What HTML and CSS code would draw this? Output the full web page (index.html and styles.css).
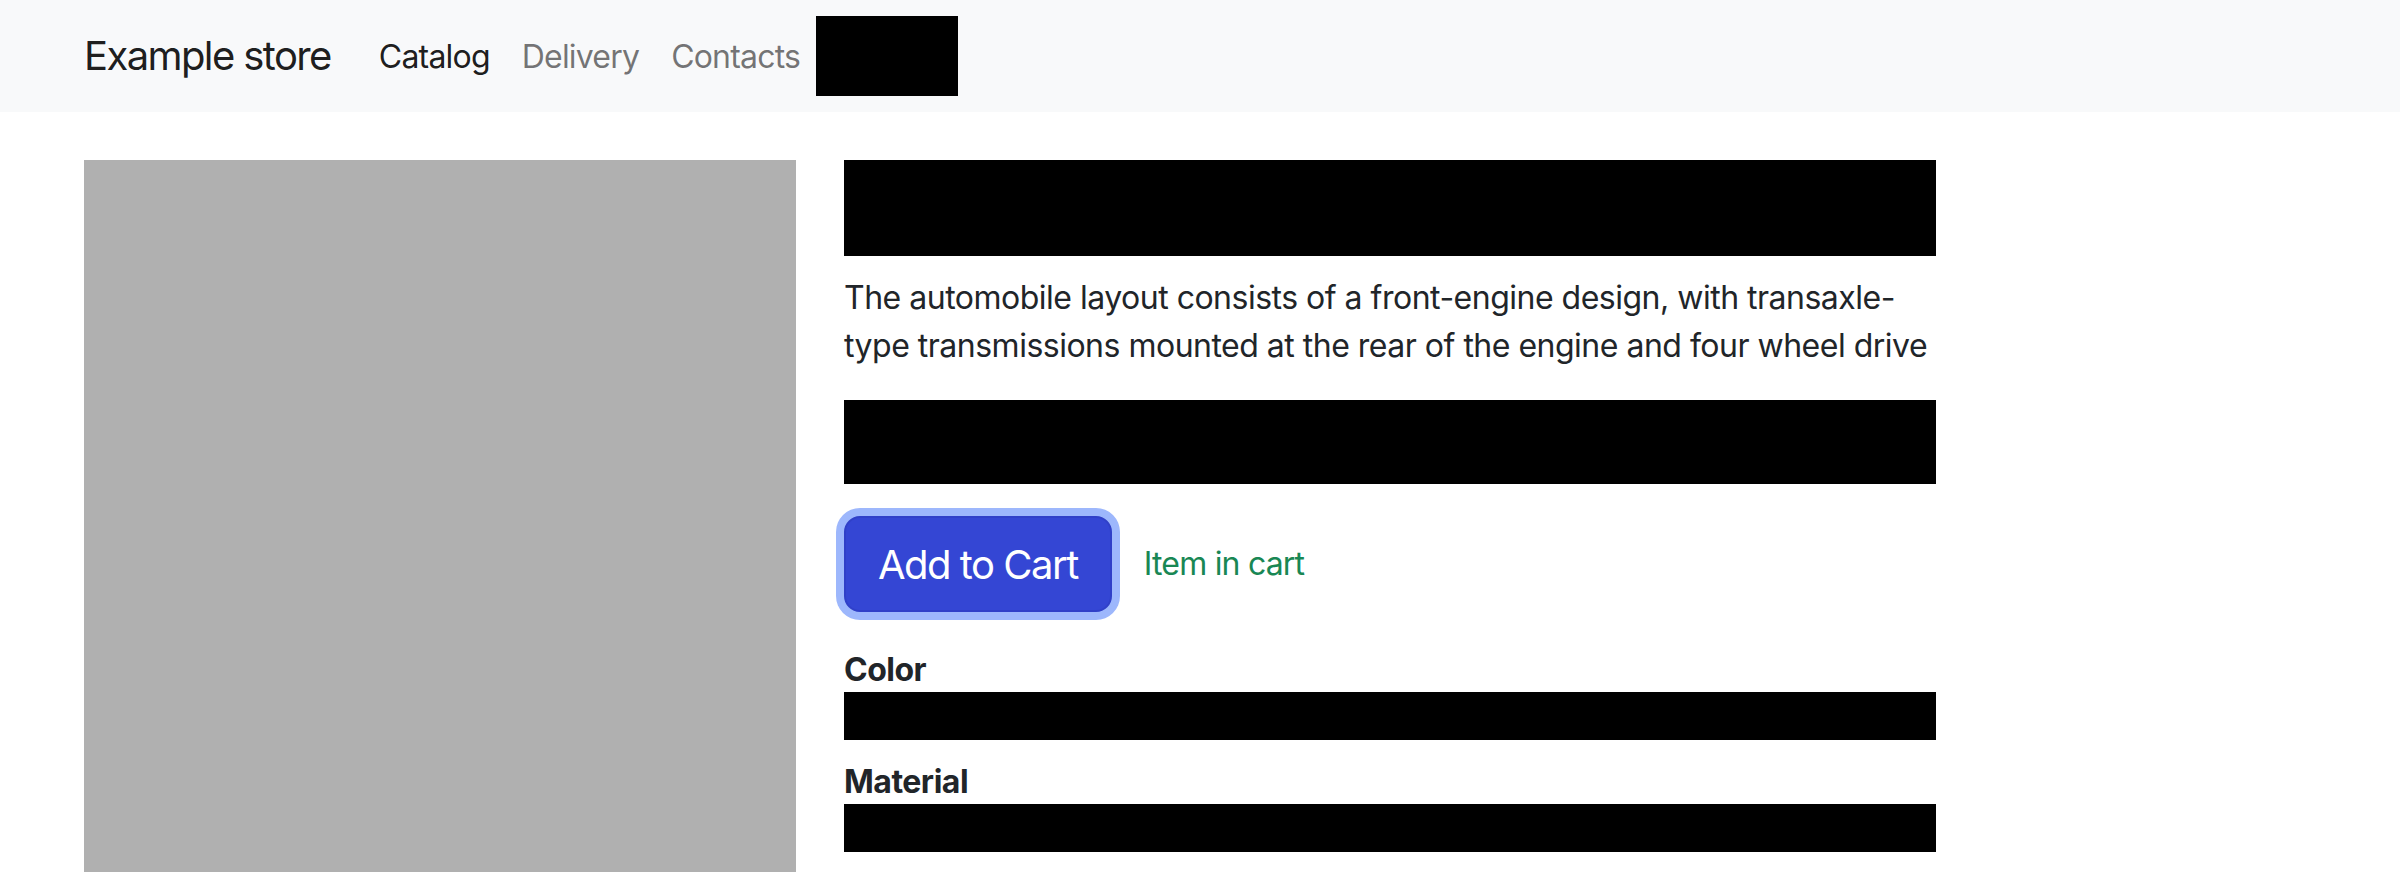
FILE: index.html
```html
<!DOCTYPE html>
<html lang="en">
<head>
<meta charset="utf-8">
<title>Example store</title>
<link rel="stylesheet" href="styles.css">
</head>
<body>
<nav class="navbar">
  <div class="container nav-inner">
    <a class="brand" href="#">Example store</a>
    <ul class="nav">
      <li><a class="nav-link active" href="#">Catalog</a></li>
      <li><a class="nav-link" href="#">Delivery</a></li>
      <li><a class="nav-link" href="#">Contacts</a></li>
      <li><span class="nav-link redacted-link"></span></li>
    </ul>
  </div>
</nav>
<main class="container main">
  <div class="row">
    <div class="col-4">
      <div class="image"></div>
    </div>
    <div class="col-6">
      <div class="redact title"></div>
      <p class="desc">The automobile layout consists of a front-engine design, with transaxle-type transmissions mounted at the rear of the engine and four wheel drive</p>
      <div class="redact price"></div>
      <div class="cart-row">
        <button class="btn" type="button">Add to Cart</button>
        <span class="in-cart">Item in cart</span>
      </div>
      <div class="option">
        <div class="label">Color</div>
        <div class="redact opt"></div>
      </div>
      <div class="option">
        <div class="label">Material</div>
        <div class="redact opt"></div>
      </div>
    </div>
  </div>
</main>
</body>
</html>
```
FILE: styles.css
```css
* { box-sizing: border-box; }
html, body { margin: 0; padding: 0; }
body {
  font-family: Inter, "Noto Sans", "Liberation Sans", sans-serif;
  font-size: 32px;
  line-height: 1.5;
  color: #212529;
  background: #fff;
}
.container {
  width: 2280px;
  margin: 0 auto;
  padding: 0 24px;
}
.navbar {
  background: #f8f9fa;
  padding: 16px 0;
}
.nav-inner {
  display: flex;
  align-items: center;
}
.brand {
  font-size: 40px;
  line-height: 60px;
  padding: 10px 0;
  margin-right: 32px;
  color: rgba(0,0,0,.9);
  text-decoration: none;
  letter-spacing: -1.6px;
}
.nav {
  display: flex;
  list-style: none;
  margin: 0;
  padding: 0;
}
.nav-link {
  display: block;
  padding: 17px 16px 15px;
  line-height: 48px;
  color: rgba(0,0,0,.55);
  text-decoration: none;
  letter-spacing: -0.8px;
}
.nav-link.active { color: rgba(0,0,0,.9); }
.redacted-link {
  width: 142px;
  height: 80px;
  background: #000;
}
.main { margin-top: 48px; }
.row {
  display: flex;
  margin: 0 -24px;
}
.col-4 { width: 760px; padding: 0 24px; }
.col-6 { width: 1140px; padding: 0 24px; }
.image {
  width: 712px;
  height: 712px;
  background: #b0b0b0;
}
.redact { background: #000; }
.title { height: 96px; margin-bottom: 16px; }
.desc {
  margin: 0 0 32px;
  padding-top: 2px;
  height: 96px;
  letter-spacing: -0.5px;
}
.price { height: 84px; margin-bottom: 32px; }
.cart-row {
  display: flex;
  align-items: center;
  margin-bottom: 32px;
}
.btn {
  font-family: inherit;
  font-size: 40px;
  line-height: 60px;
  padding: 17px 32px 15px;
  color: #fff;
  background: #3446d4;
  border: 2px solid #3040c8;
  border-radius: 16px;
  box-shadow: 0 0 0 8px #9db7fc;
  letter-spacing: -1.5px;
  cursor: pointer;
}
.in-cart {
  margin-left: 32px;
  color: #198754;
  letter-spacing: -0.8px;
}
.label {
  font-weight: 700;
  letter-spacing: -0.5px;
  padding-top: 2px;
  height: 48px;
}
.opt { height: 48px; margin-bottom: 16px; }
```
